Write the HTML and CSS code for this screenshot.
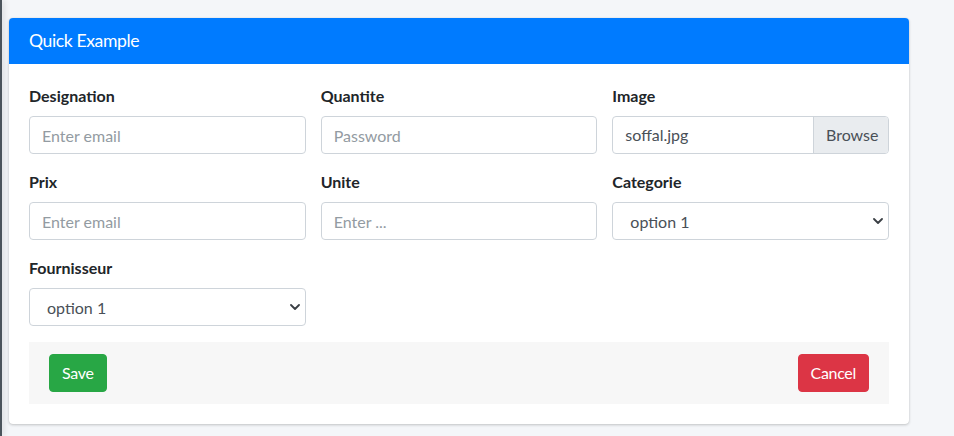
FILE: index.html
```html
<!DOCTYPE html>
<html lang="fr">
<head>
<meta charset="utf-8">
<title>Quick Example</title>
<link rel="stylesheet" href="styles.css">
</head>
<body>
<div class="layout">
  <div class="sidebar"></div>
  <main class="content">
    <div class="card">
      <div class="card-header"><h3 class="card-title">Quick Example</h3></div>
      <form class="card-body">
        <div class="grid">
          <div class="form-group">
            <label>Designation</label>
            <input class="form-control" type="text" placeholder="Enter email">
          </div>
          <div class="form-group">
            <label>Quantite</label>
            <input class="form-control" type="text" placeholder="Password">
          </div>
          <div class="form-group">
            <label>Image</label>
            <div class="custom-file">
              <span class="file-name">soffal.jpg</span>
              <span class="file-browse">Browse</span>
            </div>
          </div>
          <div class="form-group">
            <label>Prix</label>
            <input class="form-control" type="text" placeholder="Enter email">
          </div>
          <div class="form-group">
            <label>Unite</label>
            <input class="form-control" type="text" placeholder="Enter ...">
          </div>
          <div class="form-group">
            <label>Categorie</label>
            <div class="select-wrap">
              <select class="form-control select"><option>option 1</option></select>
              <svg class="chev" width="10" height="6" viewBox="0 0 10 6"><path d="M1 1l4 4 4-4" fill="none" stroke="#3a3f44" stroke-width="1.8" stroke-linecap="round" stroke-linejoin="round"/></svg>
            </div>
          </div>
          <div class="form-group">
            <label>Fournisseur</label>
            <div class="select-wrap">
              <select class="form-control select"><option>option 1</option></select>
              <svg class="chev" width="10" height="6" viewBox="0 0 10 6"><path d="M1 1l4 4 4-4" fill="none" stroke="#3a3f44" stroke-width="1.8" stroke-linecap="round" stroke-linejoin="round"/></svg>
            </div>
          </div>
        </div>
        <div class="card-footer">
          <button type="button" class="btn btn-success">Save</button>
          <button type="button" class="btn btn-danger">Cancel</button>
        </div>
      </form>
    </div>
  </main>
</div>
</body>
</html>
```
FILE: styles.css
```css
* { box-sizing: border-box; }
html, body { margin: 0; height: 100%; }
body {
  background: #f4f6f9;
  font-family: Lato, "Liberation Sans", sans-serif;
  font-size: 16px;
  color: #212529;
}
.layout { display: flex; min-height: 100%; }
.sidebar {
  width: 2px;
  flex: none;
  background: #4b545c;
  box-shadow: 1px 0 6px rgba(0,0,0,.25);
}
.content {
  flex: 1;
  padding: 18px 45px 0 7px;
}
.card {
  background: #fff;
  border-radius: 4px;
  box-shadow: 0 0 1px rgba(0,0,0,.125), 0 1px 3px rgba(0,0,0,.2);
  overflow: hidden;
}
.card-header {
  background: #007bff;
  color: #fff;
  padding: 12px 20px;
  height: 46px;
}
.card-title {
  margin: 0;
  font-size: 17.6px;
  font-weight: 400;
  line-height: 22px;
  letter-spacing: -0.4px;
}
.card-body { display: block; padding: 20px; }
.grid {
  display: grid;
  grid-template-columns: repeat(3, 1fr);
  column-gap: 15px;
}
.form-group { margin-bottom: 16px; }
label {
  display: block;
  font-weight: 700;
  line-height: 24px;
  margin-bottom: 8px;
}
.form-control {
  display: block;
  width: 100%;
  height: 38px;
  padding: 6px 12px;
  font: inherit;
  color: #495057;
  background: #fff;
  border: 1px solid #ced4da;
  border-radius: 4px;
  outline: none;
}
.form-control::placeholder { color: #939ba2; }
.custom-file {
  display: flex;
  height: 38px;
  border: 1px solid #ced4da;
  border-radius: 4px;
  overflow: hidden;
  color: #495057;
}
.file-name { flex: 1; padding: 6px 12px; line-height: 24px; }
.file-browse {
  width: 75px;
  flex: none;
  background: #e9ecef;
  border-left: 1px solid #ced4da;
  padding: 6px 12px;
  line-height: 24px;
}
.select-wrap { position: relative; }
.select {
  appearance: none;
  -webkit-appearance: none;
  padding-left: 17px;
  padding-right: 28px;
}
.chev { position: absolute; right: 6px; top: 16px; }
.card-footer {
  background: #f7f7f7;
  padding: 12px 20px;
  display: flex;
  justify-content: space-between;
}
.btn {
  font: inherit;
  line-height: 24px;
  padding: 6px 12px;
  border: 1px solid transparent;
  border-radius: 4px;
  color: #fff;
  letter-spacing: -0.3px;
}
.btn-success { background: #28a745; border-color: #28a745; }
.btn-danger { background: #dc3545; border-color: #dc3545; }
```
